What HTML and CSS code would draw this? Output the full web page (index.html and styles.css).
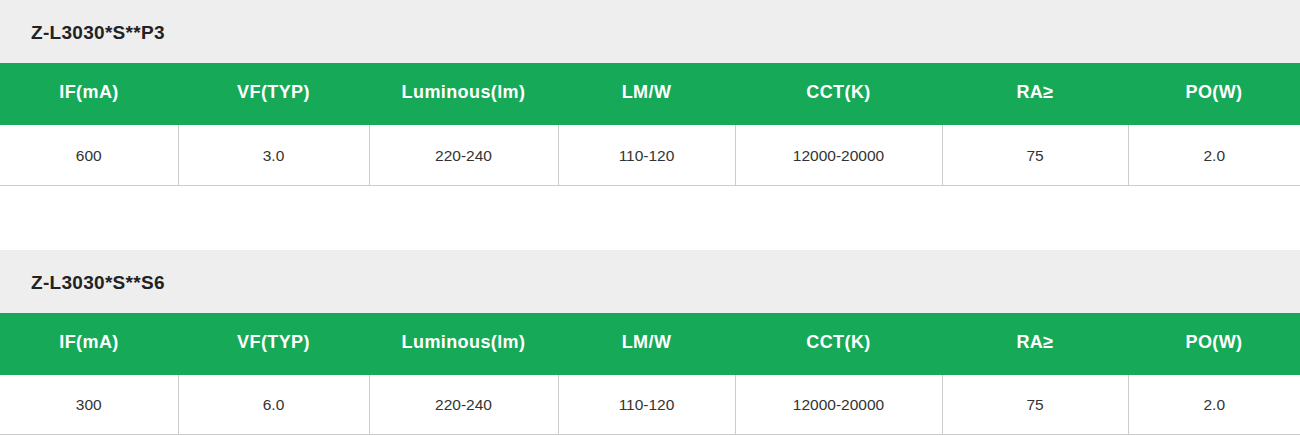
FILE: index.html
```html
<!DOCTYPE html>
<html lang="en">
<head>
    <meta charset="UTF-8">
    <meta name="viewport" content="width=device-width, initial-scale=1.0">
    <title>Z-L3030 parameters</title>
    <link rel="stylesheet" href="styles.css">
</head>
<body>
    <div class="spec">
        <h2 class="spec-title">Z-L3030*S**P3</h2>
        <table class="spec-table">
            <colgroup>
                <col class="c1"><col class="c2"><col class="c3"><col class="c4"><col class="c5"><col class="c6"><col class="c7">
            </colgroup>
            <thead>
                <tr>
                    <th>IF(mA)</th>
                    <th>VF(TYP)</th>
                    <th>Luminous(lm)</th>
                    <th>LM/W</th>
                    <th>CCT(K)</th>
                    <th>RA≥</th>
                    <th>PO(W)</th>
                </tr>
            </thead>
            <tbody>
                <tr>
                    <td>600</td>
                    <td>3.0</td>
                    <td>220-240</td>
                    <td>110-120</td>
                    <td>12000-20000</td>
                    <td>75</td>
                    <td>2.0</td>
                </tr>
            </tbody>
        </table>
    </div>

    <div class="spec">
        <h2 class="spec-title">Z-L3030*S**S6</h2>
        <table class="spec-table">
            <colgroup>
                <col class="c1"><col class="c2"><col class="c3"><col class="c4"><col class="c5"><col class="c6"><col class="c7">
            </colgroup>
            <thead>
                <tr>
                    <th>IF(mA)</th>
                    <th>VF(TYP)</th>
                    <th>Luminous(lm)</th>
                    <th>LM/W</th>
                    <th>CCT(K)</th>
                    <th>RA≥</th>
                    <th>PO(W)</th>
                </tr>
            </thead>
            <tbody>
                <tr>
                    <td>300</td>
                    <td>6.0</td>
                    <td>220-240</td>
                    <td>110-120</td>
                    <td>12000-20000</td>
                    <td>75</td>
                    <td>2.0</td>
                </tr>
            </tbody>
        </table>
    </div>
</body>
</html>
```

FILE: styles.css
```css
body {
    font-family: "Liberation Sans", Arial, sans-serif;
    margin: 0;
    padding: 0;
    background-color: #fff;
    color: #222;
}
.spec + .spec {
    margin-top: 64px;
}
.spec-title {
    margin: 0;
    height: 63px;
    box-sizing: border-box;
    padding: 3px 0 0 31px;
    line-height: 60px;
    font-size: 19px;
    letter-spacing: 0.3px;
    font-weight: bold;
    color: #222;
    background-color: #eeeeee;
}
.spec-table {
    width: 1300px;
    border-collapse: collapse;
    table-layout: fixed;
}
.c1 { width: 178px; }
.c2 { width: 191px; }
.c3 { width: 189px; }
.c4 { width: 177px; }
.c5 { width: 207px; }
.c6 { width: 186px; }
.c7 { width: 172px; }
.spec-table th {
    height: 62px;
    padding: 0 0 3px 0;
    box-sizing: border-box;
    background-color: #16a958;
    color: #fff;
    font-size: 18px;
    letter-spacing: 0.4px;
    font-weight: bold;
    text-align: center;
}
.spec-table td {
    height: 60px;
    padding: 2px 0 0 0;
    box-sizing: border-box;
    font-size: 15.5px;
    color: #333;
    text-align: center;
    border-bottom: 1px solid #cccccc;
    border-right: 1px solid #cccccc;
}
.spec-table td:last-child {
    border-right: none;
}
```
